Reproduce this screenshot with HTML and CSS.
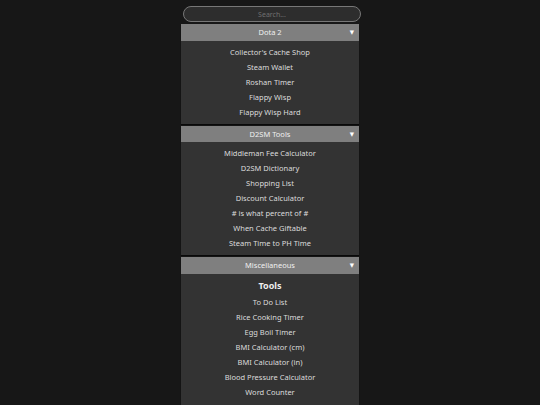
FILE: index.html
```html
<!DOCTYPE html>
<html>
<head>
<meta charset="utf-8">
<link rel="stylesheet" href="styles.css">
</head>
<body>
<div class="wrap">
  <input class="search" type="text" placeholder="Search...">
  <div class="card">
    <div class="head"><span>Dota 2</span><span class="arrow">▼</span></div>
    <div class="body">
      <div class="item">Collector's Cache Shop</div>
      <div class="item">Steam Wallet</div>
      <div class="item">Roshan Timer</div>
      <div class="item">Flappy Wisp</div>
      <div class="item">Flappy Wisp Hard</div>
    </div>
  </div>
  <div class="card">
    <div class="head"><span>D2SM Tools</span><span class="arrow">▼</span></div>
    <div class="body">
      <div class="item">Middleman Fee Calculator</div>
      <div class="item">D2SM Dictionary</div>
      <div class="item">Shopping List</div>
      <div class="item">Discount Calculator</div>
      <div class="item"># is what percent of #</div>
      <div class="item">When Cache Giftable</div>
      <div class="item">Steam Time to PH Time</div>
    </div>
  </div>
  <div class="card">
    <div class="head"><span>Miscellaneous</span><span class="arrow">▼</span></div>
    <div class="body misc">
      <div class="title">Tools</div>
      <div class="item">To Do List</div>
      <div class="item">Rice Cooking Timer</div>
      <div class="item">Egg Boil Timer</div>
      <div class="item">BMI Calculator (cm)</div>
      <div class="item">BMI Calculator (in)</div>
      <div class="item">Blood Pressure Calculator</div>
      <div class="item">Word Counter</div>
      <div class="item">Birthday Calculator</div>
    </div>
  </div>
</div>
</body>
</html>
```
FILE: styles.css
```css
html, body {
  margin: 0;
  padding: 0;
  background: #171717;
}
body {
  font-family: "Noto Sans", "DejaVu Sans", sans-serif;
  color: #dcdcdc;
}
.wrap {
  width: 178px;
  margin: 0 auto;
  padding-top: 6px;
  display: flex;
  flex-direction: column;
  gap: 2px;
}
.search {
  box-sizing: border-box;
  width: 178px;
  height: 16px;
  margin: 0 0 0 2px;
  border: 1px solid #777;
  border-radius: 8px;
  background: #2d2d2d;
  color: #ddd;
  font-family: inherit;
  font-size: 7px;
  text-align: center;
  outline: none;
  padding: 0;
}
.search::placeholder {
  color: #6f6f6f;
}
.card {
  box-shadow: 0 1px 1px rgba(0, 0, 0, 0.6);
}
.head {
  position: relative;
  height: 16.5px;
  background: #7f7f7f;
  color: #f0f0f0;
  font-size: 7.5px;
  display: flex;
  align-items: center;
  justify-content: center;
}
.arrow {
  position: absolute;
  right: 5px;
  top: 4px;
  font-size: 5.5px;
  line-height: 8px;
  color: #fff;
}
.body {
  background: #333333;
  padding: 4px 0;
  text-align: center;
}
.body.misc {
  padding-top: 3px;
}
.item {
  font-size: 7.5px;
  line-height: 15px;
  height: 15px;
}
.title {
  font-weight: bold;
  font-size: 9px;
  line-height: 18px;
  color: #eee;
}
```
